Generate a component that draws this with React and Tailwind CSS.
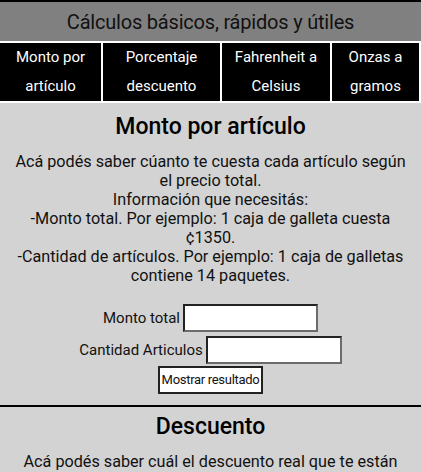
import React from "react";

const links = [
	{ top: "Monto por", bottom: "artículo", w: "w-[101px]" },
	{ top: "Porcentaje", bottom: "descuento", w: "w-[117px]" },
	{ top: "Fahrenheit a", bottom: "Celsius", w: "w-[108px]" },
	{ top: "Onzas a", bottom: "gramos", w: "w-[87px]" },
];

const Field = ({ label, w }) => (
	<div className="flex items-center gap-[3px] h-[28px]">
		<label className="text-[15px]">{label}</label>
		<input
			type="text"
			className={`${w} h-[28px] bg-white border-2 border-t-[#222] border-l-[#222] border-b-[#6b6b6b] border-r-[#6b6b6b] outline-none`}
		/>
	</div>
);

export default function App() {
	return (
		<div className="w-[421px] h-[472px] overflow-hidden bg-[#d3d3d3] font-['Roboto',sans-serif]">
			{/* header */}
			<header className="border-t-2 border-black bg-[#808080] h-[41px] flex items-center justify-center">
				<h1 className="text-[20px] text-[#111] tracking-[-0.2px]">Cálculos básicos, rápidos y útiles</h1>
			</header>

			{/* nav */}
			<nav className="bg-white py-[2px] pr-[2px] flex gap-[2px]">
				{links.map((l) => (
					<a key={l.top} href="#" className={`${l.w} h-[58px] bg-black text-white text-[15px] leading-[29px] text-center`}>
						{l.top}
						<br />
						{l.bottom}
					</a>
				))}
			</nav>

			{/* monto por articulo */}
			<section className="pt-[8px] pb-[11px] text-center text-[#111]">
				<h2 className="text-[23px] leading-[32px] font-medium text-black">Monto por artículo</h2>
				<p className="mt-[9px] text-[16.2px] leading-[19px]">
					Acá podés saber cúanto te cuesta cada artículo según
					<br />
					el precio total.
					<br />
					Información que necesitás:
					<br />
					-Monto total. Por ejemplo: 1 caja de galleta cuesta
					<br />
					¢1350.
					<br />
					-Cantidad de artículos. Por ejemplo: 1 caja de galletas
					<br />
					contiene 14 paquetes.
				</p>
				<div className="mt-[19px] flex flex-col items-center gap-[4px]">
					<Field label="Monto total" w="w-[135px]" />
					<Field label="Cantidad Articulos" w="w-[136px]" />
					<button className="mt-[-2px] w-[105px] h-[28px] bg-white border-2 border-[#222] text-[13px] text-[#111] tracking-[-0.3px]">
						Mostrar resultado
					</button>
				</div>
			</section>

			{/* descuento */}
			<section className="border-t-2 border-black pt-[4px] text-center text-[#111]">
				<h2 className="text-[23px] leading-[32px] font-medium text-black">Descuento</h2>
				<p className="mt-[9px] text-[16.2px] leading-[19px]">Acá podés saber cuál el descuento real que te están</p>
			</section>
		</div>
	);
}
